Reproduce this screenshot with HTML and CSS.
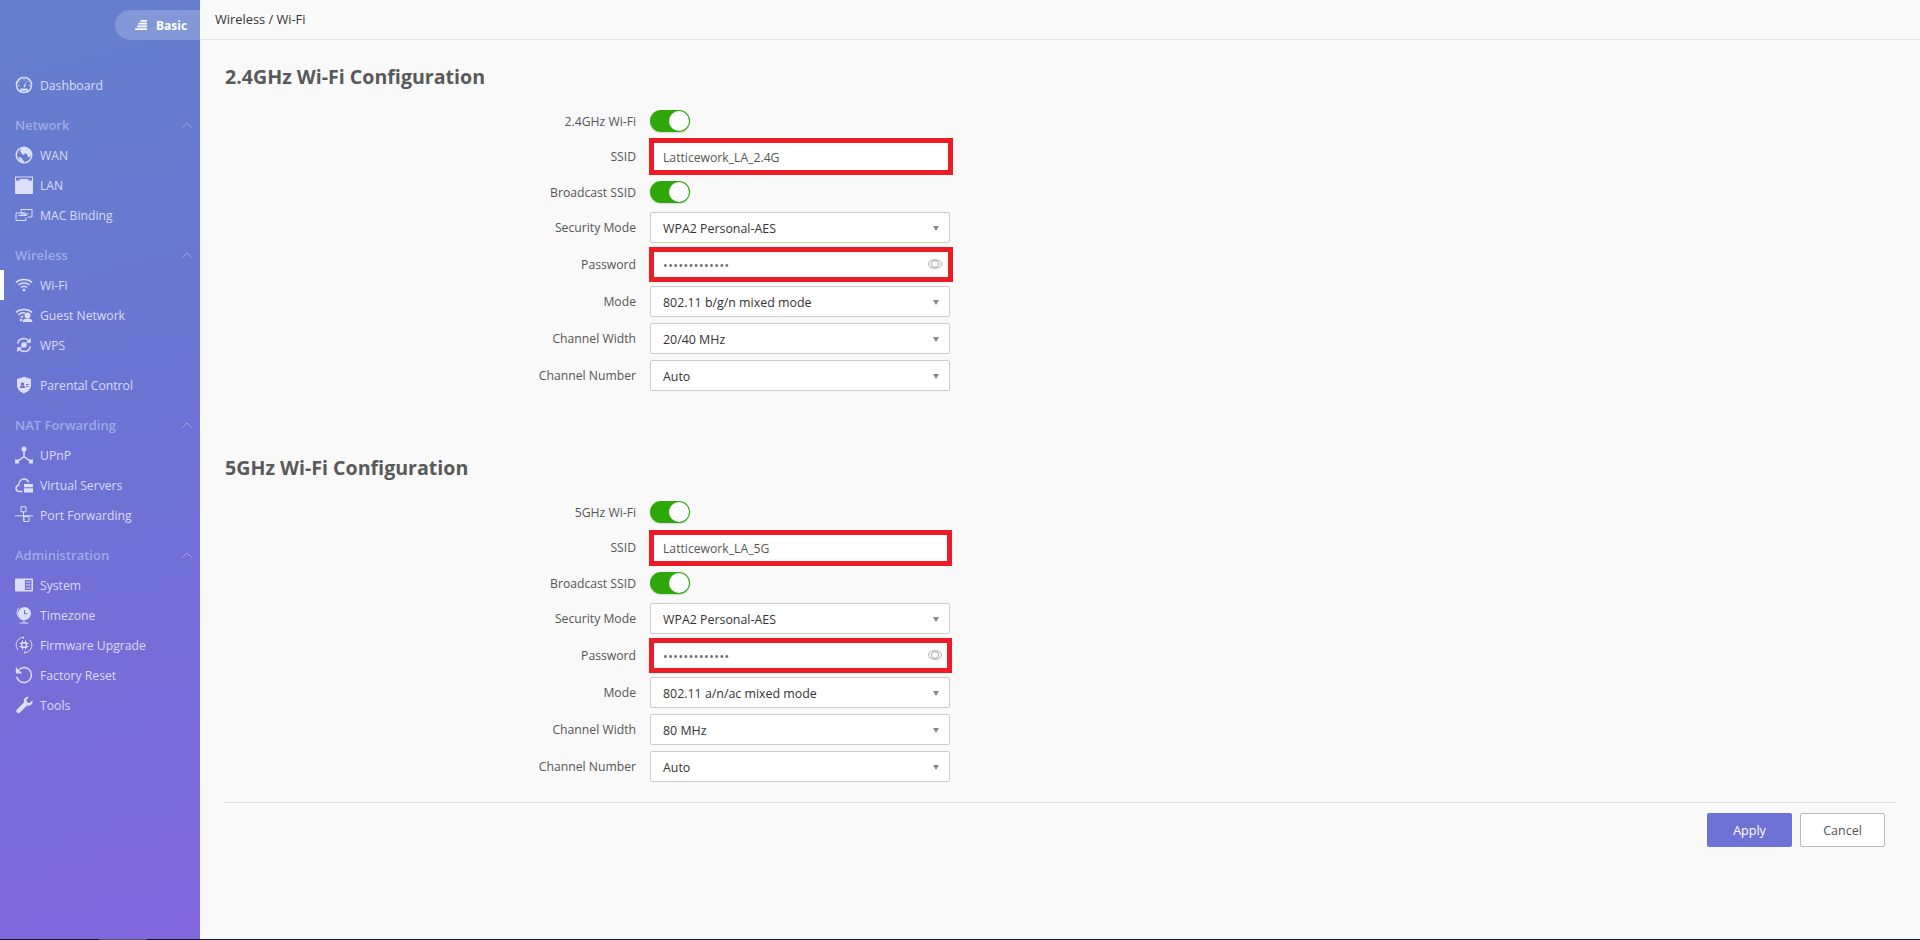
FILE: index.html
```html
<!DOCTYPE html>
<html lang="en">
<head>
<meta charset="utf-8">
<title>Wireless / Wi-Fi</title>
<link rel="stylesheet" href="styles.css">
</head>
<body>
<div class="shell">
  <aside class="sidebar">
    <div class="pill-row">
      <div class="pill">
        <svg class="pill-icon" viewBox="0 0 14 11"><path d="M6 0h7v2H6zM3.500 3h9.500v2H3.500zM2 6h11v2H2zM0 9h13v2H0z"/></svg>
        <span>Basic</span>
      </div>
    </div>
    <nav class="nav">
      <a class="item"><svg class="ic" viewBox="0 0 18 18"><circle class="s" cx="9" cy="9" r="7.600"/><path class="s thin" d="M9 3v1.500M4.200 5l1 1M13.800 5l-1 1M3 9.500h1.500M13.500 9.500H15"/><path d="M11.800 4.800 8.400 10.600l1.500.8zM5.500 12.500h7l.8 2.200H4.700z"/></svg><span>Dashboard</span></a>

      <div class="group">
        <div class="group-head"><span>Network</span><svg class="chev" viewBox="0 0 10 6"><path d="M.5 5.500 5 1l4.500 4.500"/></svg></div>
        <a class="item"><svg class="ic" viewBox="0 0 18 18"><circle class="s" cx="9" cy="9" r="7.800"/><path d="M6 2.500c2-1.200 6-1.200 8 .8 2 2 2.600 5 1.400 7.200l-2.400 1-.6-3-2.400-1.500-1 2.200L7 8 5.200 5.500zM3 11l3 .5 2.500 3 .5 2C6.500 16.500 4 14 3 11z"/></svg><span>WAN</span></a>
        <a class="item"><svg class="ic" viewBox="0 0 18 18"><path d="M0 .500h18v17.500H0z"/><path class="cut" d="M1 1.500h16v3h-3.500V3h-9v1.500H1z"/></svg><span>LAN</span></a>
        <a class="item"><svg class="ic" viewBox="0 0 18 18"><path class="s thin" d="M6 6.500V3.500h11V11h-4M11 11.500v3H1V7h9.500M3.500 9.500h8M9.500 8l2 1.500M13.500 8H6M8 6.500 6 8"/></svg><span>MAC Binding</span></a>
      </div>

      <div class="group">
        <div class="group-head"><span>Wireless</span><svg class="chev" viewBox="0 0 10 6"><path d="M.5 5.500 5 1l4.500 4.500"/></svg></div>
        <a class="item active"><svg class="ic" viewBox="0 0 18 18"><path class="s" d="M.8 6.500c4.500-4 11.900-4 16.400 0M3.300 9c3.200-2.800 8.200-2.800 11.400 0M5.800 11.500c1.800-1.500 4.600-1.500 6.400 0"/><circle cx="9" cy="14" r="1.500"/></svg><span>Wi-Fi</span></a>
        <a class="item"><svg class="ic" viewBox="0 0 18 18"><path class="s" d="M.8 6.500c4.500-4 11.900-4 16.400 0M3.300 9c2.300-2 4.800-2.400 6.700-2M5.800 11.500c.8-.7 1.600-1 2.400-1.200"/><circle cx="12.500" cy="9.500" r="3"/><path d="M7.500 16c0-2.500 2-3.500 5-3.500s5 1 5 3.500z"/><circle cx="6" cy="14" r="1.300"/></svg><span>Guest Network</span></a>
        <a class="item"><svg class="ic" viewBox="0 0 18 18"><path class="s" d="M2.500 7.500C3.300 4.600 6 2.500 9 2.500c2 0 3.800 1 5 2.400M15.500 10.500c-.8 2.900-3.500 5-6.500 5-2 0-3.800-1-5-2.400"/><path d="M15.800 1.800v5h-5zM2.200 16.200v-5h5z"/><circle cx="9" cy="9" r="2.800"/></svg><span>WPS</span></a>
      </div>

      <a class="item solo"><svg class="ic" viewBox="0 0 18 18"><path fill-rule="evenodd" d="M9 .8 16 3v6c0 4-3 7-7 8.500C5 16 2 13 2 9V3zM7.500 6.500a1.700 1.700 0 1 0 .01 0zM4.800 12c0-1.600 1.200-2.400 2.700-2.400s2.700.8 2.700 2.400zM11 8h2.500v1H11zM11 10h2.500v1H11z"/></svg><span>Parental Control</span></a>

      <div class="group">
        <div class="group-head"><span>NAT Forwarding</span><svg class="chev" viewBox="0 0 10 6"><path d="M.5 5.500 5 1l4.500 4.500"/></svg></div>
        <a class="item"><svg class="ic" viewBox="0 0 18 18"><circle cx="9" cy="3" r="2.500"/><path d="M0 13.500h4v4H0zM14 13.500h4v4h-4z"/><path class="s" d="M9 5v5.500M9 10.500 3 15M9 10.500l6 4.500"/></svg><span>UPnP</span></a>
        <a class="item"><svg class="ic" viewBox="0 0 18 18"><path class="s" d="M7.500 15.500H4.500C2.500 15.500 1 14 1 12.300c0-1.600 1-2.800 2.600-3.100C3.900 5.700 6.200 3 9 3c2.300 0 4 1.400 4.600 3.200"/><path d="M9 8h9v3.200H9zM9 12.200h9v4.300H9z"/></svg><span>Virtual Servers</span></a>
        <a class="item"><svg class="ic" viewBox="0 0 18 18"><path class="s thin" d="M6 .8h5v5H6zM9 10.500h5v5H9zM8.500 5.800v9H9M0 9.800h18"/></svg><span>Port Forwarding</span></a>
      </div>

      <div class="group">
        <div class="group-head"><span>Administration</span><svg class="chev" viewBox="0 0 10 6"><path d="M.5 5.500 5 1l4.500 4.500"/></svg></div>
        <a class="item"><svg class="ic" viewBox="0 0 18 18"><path fill-rule="evenodd" d="M1 2.500h16a1 1 0 0 1 1 1V14.500a1 1 0 0 1-1 1H1a1 1 0 0 1-1-1V3.500a1 1 0 0 1 1-1zM10 4v10h6.500V4zM11 5.500h4.500v1H11zM11 8.500h4.500v1H11zM11 11.500h4.500v1H11z"/></svg><span>System</span></a>
        <a class="item"><svg class="ic" viewBox="0 0 18 18"><path fill-rule="evenodd" d="M9.500 1a6.500 6.500 0 1 1 0 13 6.500 6.500 0 0 1 0-13zM9 4v4.300h3.500v-1H10V4z"/><path class="s thin" d="M4 1.800C1.500 4.500 1.500 9 4 11.500c1.500 1.500 3.500 2.500 5.500 2.500M9 14.500V17M5 17h8.500"/></svg><span>Timezone</span></a>
        <a class="item"><svg class="ic" viewBox="0 0 18 18"><path class="s thin" d="M3 14C.5 11 .5 6.500 3 4c1.200-1.200 2.800-2.300 4.500-2.700M15 4c2.500 3 2.500 7.500 0 10-1.200 1.200-2.800 2.300-4.500 2.700"/><path d="M9 .4 6.500 1.500 9 3zM9 17.600l2.500-1.100L9 15z"/><path fill-rule="evenodd" d="M6 6h6v6H6zM7.500 7.500v3h3v-3z"/><path class="s thin" d="M7.500 4.500V6M10.500 4.500V6M7.500 12v1.500M10.500 12v1.500M4.500 7.500H6M4.500 10.500H6M12 7.500h1.500M12 10.500h1.500"/></svg><span>Firmware Upgrade</span></a>
        <a class="item"><svg class="ic" viewBox="0 0 18 18"><path class="s" d="M4 3.800C5.400 2.500 7.100 1.500 9 1.500a7.500 7.500 0 1 1-7.300 9.300"/><path d="M.8 1v6.500h6.500z"/></svg><span>Factory Reset</span></a>
        <a class="item"><svg class="ic" viewBox="0 0 18 18"><path d="M17.500 4.200c.4 1.500 0 3.100-1.100 4.200-1.200 1.200-2.900 1.500-4.400 1L5 16.500c-.9.900-2.300.9-3.100 0-.9-.9-.9-2.300 0-3.100L9 6.300c-.5-1.500-.2-3.200 1-4.400C11.100.800 12.700.400 14.200.800l-2.900 2.900.6 2.600 2.600.6z"/></svg><span>Tools</span></a>
      </div>
    </nav>
  </aside>

  <main class="main">
    <header class="crumb">Wireless / Wi-Fi</header>
    <div class="content">
      <section class="section">
        <h2>2.4GHz Wi-Fi Configuration</h2>
        <div class="row row-toggle"><label>2.4GHz Wi-Fi</label><div class="toggle"><i></i></div></div>
        <div class="row row-ssid"><label>SSID</label><div class="field input"><span class="mark mark-a"></span><span>Latticework_LA_2.4G</span></div></div>
        <div class="row row-toggle"><label>Broadcast SSID</label><div class="toggle"><i></i></div></div>
        <div class="row"><label>Security Mode</label><div class="field select">WPA2 Personal-AES<i class="caret"></i></div></div>
        <div class="row"><label>Password</label><div class="field input"><span class="mark mark-b"></span><span class="dots">•••••••••••••</span><svg class="eye" viewBox="0 0 14 10"><ellipse cx="7" cy="5" rx="6.500" ry="4.300"/><ellipse cx="7" cy="5" rx="3.600" ry="3.300"/></svg></div></div>
        <div class="row"><label>Mode</label><div class="field select">802.11 b/g/n mixed mode<i class="caret"></i></div></div>
        <div class="row"><label>Channel Width</label><div class="field select">20/40 MHz<i class="caret"></i></div></div>
        <div class="row"><label>Channel Number</label><div class="field select">Auto<i class="caret"></i></div></div>
      </section>
      <section class="section section-last">
        <h2>5GHz Wi-Fi Configuration</h2>
        <div class="row row-toggle"><label>5GHz Wi-Fi</label><div class="toggle"><i></i></div></div>
        <div class="row row-ssid"><label>SSID</label><div class="field input"><span class="mark mark-c"></span><span>Latticework_LA_5G</span></div></div>
        <div class="row row-toggle"><label>Broadcast SSID</label><div class="toggle"><i></i></div></div>
        <div class="row"><label>Security Mode</label><div class="field select">WPA2 Personal-AES<i class="caret"></i></div></div>
        <div class="row"><label>Password</label><div class="field input"><span class="mark mark-d"></span><span class="dots">•••••••••••••</span><svg class="eye" viewBox="0 0 14 10"><ellipse cx="7" cy="5" rx="6.500" ry="4.300"/><ellipse cx="7" cy="5" rx="3.600" ry="3.300"/></svg></div></div>
        <div class="row"><label>Mode</label><div class="field select">802.11 a/n/ac mixed mode<i class="caret"></i></div></div>
        <div class="row"><label>Channel Width</label><div class="field select">80 MHz<i class="caret"></i></div></div>
        <div class="row"><label>Channel Number</label><div class="field select">Auto<i class="caret"></i></div></div>
      </section>
      <footer class="actions">
        <button class="btn btn-primary">Apply</button>
        <button class="btn btn-plain">Cancel</button>
      </footer>
    </div>
  </main>
</div>
<div class="edge"><div class="edge-thumb"></div></div>
</body>
</html>
```
FILE: styles.css
```css
* { box-sizing: border-box; }
html, body { margin: 0; height: 940px; overflow: hidden; }
body {
  font-family: "Open Sans", sans-serif;
  font-size: 12.2px;
  color: #333;
  background: #f9f9f9;
}
.shell { display: flex; height: 939px; }
.edge { height: 1px; background: #14162a; padding-left: 99px; }
.edge-thumb { width: 48px; height: 1px; background: #55555f; }

/* sidebar */
.sidebar {
  width: 200px;
  flex: none;
  color: #d9dcf8;
  background: linear-gradient(165deg, #6480cd 0%, #6b74d3 42%, #8066dd 100%);
}
.pill-row { display: flex; justify-content: flex-end; padding-top: 10px; }
.pill {
  width: 85px;
  height: 30px;
  display: flex;
  align-items: center;
  gap: 8px;
  padding-left: 20px;
  border-radius: 15px 0 0 15px;
  background: rgba(255, 255, 255, .2);
  color: #fff;
  font-weight: 700;
  font-size: 12px;
}
.pill-icon { width: 13px; height: 10px; fill: #fff; }
.nav { margin-top: 30px; }
.item {
  display: flex;
  align-items: center;
  gap: 7px;
  height: 30px;
  padding-left: 15px;
  position: relative;
}
.item.active::before {
  content: "";
  position: absolute;
  left: 0;
  top: 0;
  width: 4px;
  height: 30px;
  background: #fff;
}
.item.solo { margin-top: 10px; }
.group { margin-top: 10px; }
.group-head {
  height: 30px;
  display: flex;
  align-items: center;
  justify-content: space-between;
  padding: 0 8px 0 15px;
  font-size: 13px;
  font-weight: 600;
  color: #9eabe8;
}
.chev { width: 10px; height: 6px; fill: none; stroke: #9eabe8; stroke-width: 1; }
.ic { width: 18px; height: 18px; flex: none; fill: #dcdff9; }
.ic .s { fill: none; stroke: #dcdff9; stroke-width: 1.500; }
.ic .thin { stroke-width: 1; }
.ic .cut { fill: #6a78d2; }

/* main */
.main { flex: 1; min-width: 0; }
.crumb {
  height: 40px;
  padding: 0 15px;
  line-height: 39px;
  font-size: 12.8px;
  color: #333;
  border-bottom: 1px solid #e5e5e5;
}
.content { padding: 22px 25px 0; }
.section { height: 391px; }
.section-last { height: 349px; }
.section h2 {
  margin: 0 0 14px;
  height: 30px;
  line-height: 30px;
  font-size: 19.6px;
  font-weight: 700;
  color: #595959;
}
.row { display: flex; align-items: center; height: 31px; margin-bottom: 6px; }
.row-toggle { height: 30px; margin-bottom: 5px; }
.row-ssid { margin-bottom: 5px; }
.row label {
  width: 411px;
  margin-right: 14px;
  text-align: right;
  color: #555;
}
.toggle {
  width: 40px;
  height: 22px;
  border-radius: 11px;
  background: #2ea70a;
  box-shadow: 0 1px 2px rgba(0, 0, 0, .15);
  display: flex;
  justify-content: flex-end;
  padding: 1px;
}
.toggle i { width: 20px; height: 20px; border-radius: 50%; background: #fff; }
.field {
  width: 300px;
  height: 31px;
  display: flex;
  align-items: center;
  justify-content: space-between;
  padding: 1px 12px 0;
  background: #fff;
  border: 1px solid #ccc;
  border-radius: 2px;
  position: relative;
}
.select { font-size: 12.4px; }
.input { color: #555; border-color: transparent; }
.mark { position: absolute; border: 5px solid #ed1c24; }
.mark-a { left: -2px; right: -4px; top: -4px; bottom: -4px; }
.mark-b { left: -2px; right: -4px; top: -3px; bottom: -3px; }
.mark-c { left: -2px; right: -3px; top: -3px; bottom: -4px; }
.mark-d { left: -2px; right: -3px; top: -3px; bottom: -3px; }
.dots { letter-spacing: .55px; color: #666; }
.eye { width: 14px; height: 10px; fill: none; stroke: #aaa; stroke-width: 1; margin-right: -5px; position: relative; top: -1px; }
.caret {
  width: 0;
  height: 0;
  margin-right: -2px;
  border-left: 3.500px solid transparent;
  border-right: 3.500px solid transparent;
  border-top: 5px solid #888;
}
.actions {
  border-top: 1px solid #ddd;
  display: flex;
  justify-content: flex-end;
  gap: 8px;
  padding: 10px 10px 0 0;
}
.btn {
  width: 85px;
  height: 34px;
  border-radius: 2px;
  font: 12.5px "Open Sans", sans-serif;
}
.btn-primary { background: #6e72d4; border: 0; color: #fff; }
.btn-plain { background: #fff; border: 1px solid #bbb; color: #555; }
```
